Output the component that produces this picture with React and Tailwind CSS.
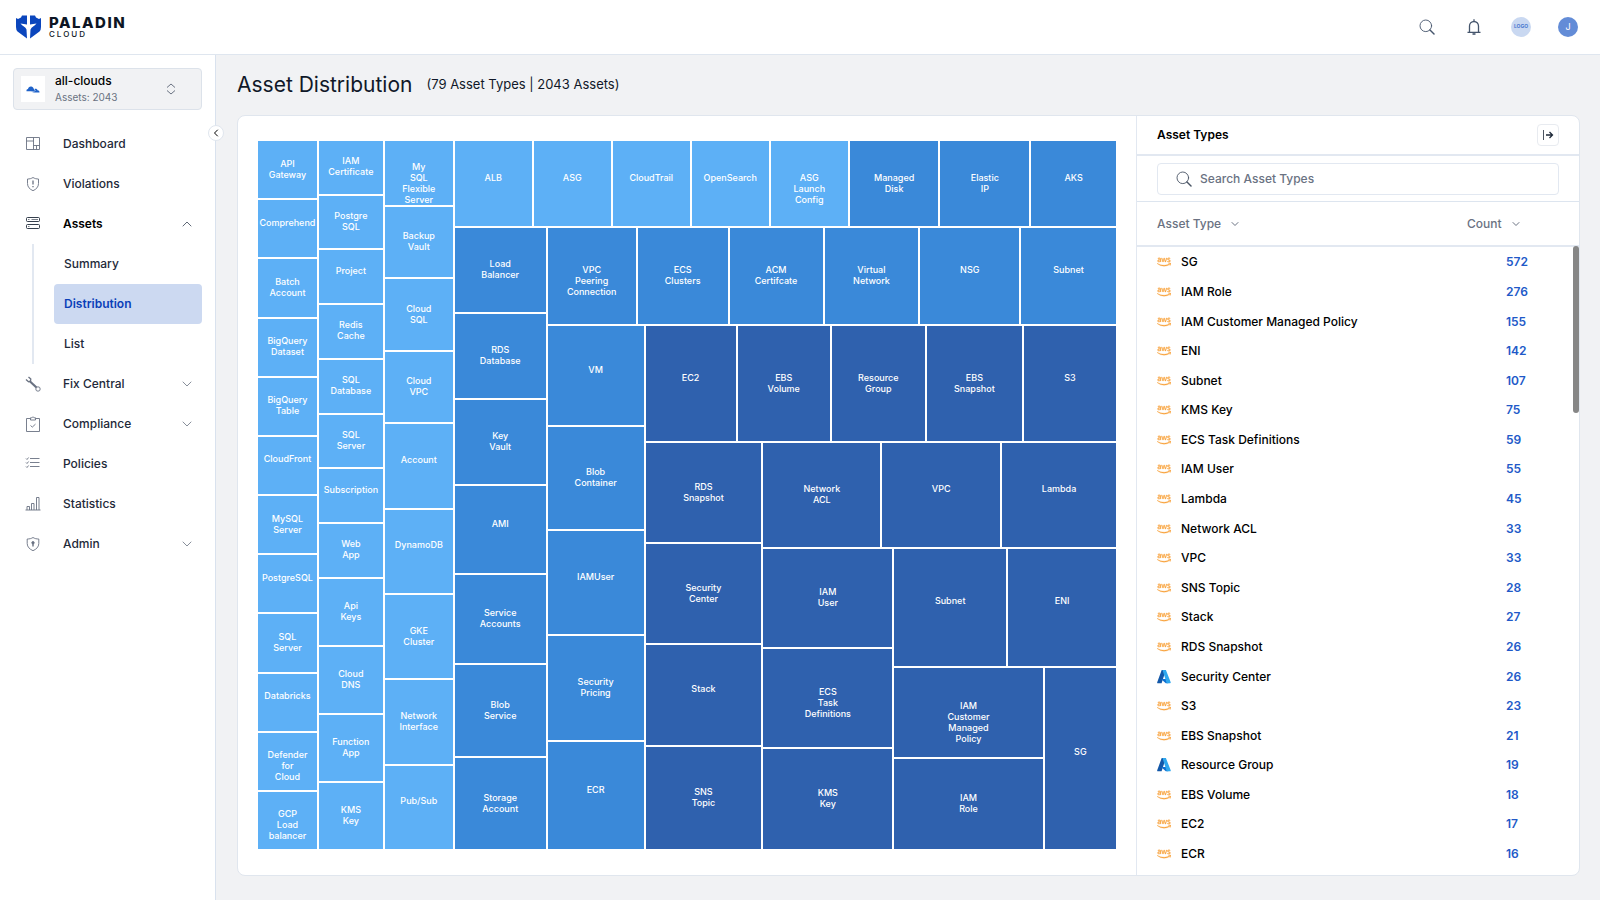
import { ChevronDown, ChevronLeft, ChevronUp } from 'lucide-react';
import { FaAws } from 'react-icons/fa';

const LIGHT = 'bg-[#5db0f6]';
const MID = 'bg-[#3a89d9]';
const DARK = 'bg-[#2f61ae]';

const tile = (size, color, label) => ({ size, color, label });
const row = (size, ...items) => ({ size, dir: 'row', items });
const col = (size, ...items) => ({ size, dir: 'col', items });

const assetMap = row(
  1,
  col(
    61,
    ...[
      'API Gateway', 'Comprehend', 'Batch Account', 'BigQuery Dataset', 'BigQuery Table', 'CloudFront',
      'MySQL Server', 'PostgreSQL', 'SQL Server', 'Databricks', 'Defender for Cloud', 'GCP Load balancer',
    ].map((name) => tile(59, LIGHT, name))
  ),
  col(
    66,
    ...['IAM Certificate', 'Postgre SQL', 'Project', 'Redis Cache', 'SQL Database', 'SQL Server', 'Subscription', 'Web App']
      .map((name) => tile(55, LIGHT, name)),
    ...['Api Keys', 'Cloud DNS', 'Function App', 'KMS Key'].map((name) => tile(69, LIGHT, name))
  ),
  col(
    70,
    tile(65, LIGHT, 'My SQL Flexible Server'),
    ...['Backup Vault', 'Cloud SQL', 'Cloud VPC'].map((name) => tile(72, LIGHT, name)),
    ...['Account', 'DynamoDB', 'GKE Cluster', 'Network Interface', 'Pub/Sub'].map((name) => tile(85, LIGHT, name))
  ),
  col(
    664,
    row(
      87,
      ...['ALB', 'ASG', 'CloudTrail', 'OpenSearch', 'ASG Launch Config'].map((name) => tile(79, LIGHT, name)),
      tile(91, MID, 'Managed Disk'),
      tile(91, MID, 'Elastic IP'),
      tile(87, MID, 'AKS')
    ),
    row(
      623,
      col(
        93,
        tile(86, MID, 'Load Balancer'),
        tile(86, MID, 'RDS Database'),
        tile(86, MID, 'Key Vault'),
        tile(89, MID, 'AMI'),
        tile(90, MID, 'Service Accounts'),
        tile(93, MID, 'Blob Service'),
        tile(93, MID, 'Storage Account')
      ),
      col(
        571,
        row(
          98,
          tile(90, MID, 'VPC Peering Connection'),
          tile(92, MID, 'ECS Clusters'),
          tile(95, MID, 'ACM Certifcate'),
          tile(96, MID, 'Virtual Network'),
          tile(101, MID, 'NSG'),
          tile(97, MID, 'Subnet')
        ),
        row(
          525,
          col(
            98,
            tile(101, MID, 'VM'),
            tile(104, MID, 'Blob Container'),
            tile(105, MID, 'IAMUser'),
            tile(106, MID, 'Security Pricing'),
            tile(109, MID, 'ECR')
          ),
          col(
            473,
            row(
              117,
              tile(92, DARK, 'EC2'),
              tile(94, DARK, 'EBS Volume'),
              tile(95, DARK, 'Resource Group'),
              tile(97, DARK, 'EBS Snapshot'),
              tile(94, DARK, 'S3')
            ),
            row(
              408,
              col(
                118,
                tile(101, DARK, 'RDS Snapshot'),
                tile(101, DARK, 'Security Center'),
                tile(102, DARK, 'Stack'),
                tile(104, DARK, 'SNS Topic')
              ),
              col(
                355,
                row(106, tile(119, DARK, 'Network ACL'), tile(120, DARK, 'VPC'), tile(116, DARK, 'Lambda')),
                row(
                  302,
                  col(131, tile(100, DARK, 'IAM User'), tile(101, DARK, 'ECS Task Definitions'), tile(102, DARK, 'KMS Key')),
                  col(
                    224,
                    row(119, tile(114, DARK, 'Subnet'), tile(110, DARK, 'ENI')),
                    row(
                      184,
                      col(152, tile(91, DARK, 'IAM Customer Managed Policy'), tile(92, DARK, 'IAM Role')),
                      tile(72, DARK, 'SG')
                    )
                  )
                )
              )
            )
          )
        )
      )
    )
  )
);

const assetTypes = [
  ['SG', 572], ['IAM Role', 276], ['IAM Customer Managed Policy', 155], ['ENI', 142], ['Subnet', 107],
  ['KMS Key', 75], ['ECS Task Definitions', 59], ['IAM User', 55], ['Lambda', 45], ['Network ACL', 33],
  ['VPC', 33], ['SNS Topic', 28], ['Stack', 27], ['RDS Snapshot', 26], ['Security Center', 26, 'azure'],
  ['S3', 23], ['EBS Snapshot', 21], ['Resource Group', 19, 'azure'], ['EBS Volume', 18], ['EC2', 17], ['ECR', 16],
];

const NavSvg = ({ children }) => (
  <svg className="w-4 h-4 text-gray-500" viewBox="0 0 16 16" fill="none" stroke="currentColor" strokeWidth="0.9">
    {children}
  </svg>
);

const icons = {
  dashboard: <NavSvg><path d="M1.500 1.500h13v12h-13zM8.500 1.500v12M1.500 5h7M8.500 9.500h6M11.500 9.500v4" /></NavSvg>,
  violations: (
    <NavSvg>
      <path d="M8 1.500c1.700 1.100 3.500 1.500 5.500 1.500v4.500c0 3.500-2.200 5.700-5.500 7.200-3.300-1.500-5.500-3.700-5.500-7.200V3c2 0 3.800-.4 5.500-1.500z" />
      <path d="M8 4.500v4M8 10v1.300" strokeWidth="1.300" />
    </NavSvg>
  ),
  assets: (
    <svg className="w-4 h-4 text-gray-800" viewBox="0 0 16 16" fill="none" stroke="currentColor" strokeWidth="0.9">
      <rect x="1.500" y="1.500" width="13" height="4" rx="1" />
      <rect x="1.500" y="8.500" width="13" height="4" rx="1" />
      <path d="M3 3.500h1.500M3 10.500h1.500M6.500 3.500h6.500" strokeWidth="0.600" />
    </svg>
  ),
  fix: (
    <NavSvg>
      <path d="M4.500 5l7 6.500" strokeWidth="2.200" />
      <path d="M1 3.500l2.500 2.300 2-.8.300-2L3.500 1" strokeWidth="1.300" />
      <circle cx="13" cy="13" r="2.200" />
    </NavSvg>
  ),
  compliance: (
    <NavSvg>
      <path d="M5 2.500H1.500v13h13v-13H11" />
      <path d="M5.500 4V1.800h1.300a1.300 1.300 0 0 1 2.400 0h1.300V4zM5.500 9.500l1.800 1.600 3.200-3" />
    </NavSvg>
  ),
  policies: <NavSvg><path d="M5 2.500h9.500M5 6.500h9.500M5 10.500h9.500M1 2.500l1 1 1.600-2M1 6.500l1 1 1.600-2M1 10.500l1 1 1.600-2" /></NavSvg>,
  statistics: <NavSvg><path d="M.5 14h15M2 14v-3.500h2.500V14M6.500 14V7.500H9V14M11.500 14V1.500H14V14" /></NavSvg>,
  admin: (
    <NavSvg>
      <path d="M8 1.500c1.700 1.100 3.500 1.500 5.800 1.500v4.500c0 3.500-2.500 5.700-5.800 7.200-3.300-1.500-5.800-3.700-5.800-7.200V3c2.300 0 4.100-.4 5.800-1.500z" />
      <circle cx="8" cy="6.800" r="1.200" fill="currentColor" />
      <path d="M8 7.500v3" strokeWidth="1.400" />
    </NavSvg>
  ),
};

const navItems = [
  { icon: 'dashboard', label: 'Dashboard' },
  { icon: 'violations', label: 'Violations' },
  { icon: 'assets', label: 'Assets', open: true, children: ['Summary', 'Distribution', 'List'] },
  { icon: 'fix', label: 'Fix Central', expandable: true },
  { icon: 'compliance', label: 'Compliance', expandable: true },
  { icon: 'policies', label: 'Policies' },
  { icon: 'statistics', label: 'Statistics' },
  { icon: 'admin', label: 'Admin', expandable: true },
];

const SearchIcon = () => (
  <svg className="w-4 h-4" viewBox="0 0 16 16" fill="none" stroke="currentColor" strokeLinecap="round">
    <circle cx="6.800" cy="6.800" r="5.800" strokeWidth="0.900" />
    <path d="M11 11l4 4" strokeWidth="1.500" />
  </svg>
);

const BellIcon = () => (
  <svg className="w-4 h-4" viewBox="0 0 16 16" fill="none" stroke="currentColor" strokeWidth="1.300">
    <path d="M3.500 13V7a4.500 4.500 0 0 1 9 0v6M1.500 13.300h13M8 .3v2" />
    <path d="M6.500 15h3" strokeWidth="1.600" />
  </svg>
);

const AzureIcon = () => (
  <svg className="w-3.5 h-3.5" viewBox="0 0 14 14">
    <path d="M4.700 0h4.200L4.600 13.300H1a.8.800 0 0 1-.8-1z" fill="#1257a8" />
    <path d="M4 9h6.500l.8 4.300H8.800z" fill="#0f6fd0" />
    <path d="M5.500 0h3.400l4.800 12.300a.8.800 0 0 1-.8 1H9.700z" fill="#2fa8ee" />
  </svg>
);

// Each node takes a share of its parent equal to its size
function MapNode({ node }) {
  if (node.items) {
    return (
      <div
        className={`flex basis-0 min-w-0 min-h-0 ${node.dir === 'row' ? 'flex-row' : 'flex-col'}`}
        style={{ flexGrow: node.size }}
      >
        {node.items.map((item, i) => (
          <MapNode key={i} node={item} />
        ))}
      </div>
    );
  }
  return (
    <div
      className={`grid grid-rows-2 basis-0 min-w-0 min-h-0 border border-white text-center text-[9px] leading-[11px] font-medium text-white ${node.color}`}
      style={{ flexGrow: node.size }}
    >
      <div className="row-start-2 -mt-3">
        {node.label.split(' ').map((word, i) => (
          <div key={i}>{word}</div>
        ))}
      </div>
    </div>
  );
}

function Header() {
  return (
    <header className="flex h-[55px] shrink-0 items-center justify-between border-b border-[#dfe6ef] bg-white pl-4 pr-[22px]">
      <a href="#" className="flex items-center gap-2">
        <svg className="w-[25px] h-6" viewBox="0 0 25 24" fill="#0b46bd">
          <path d="M11 .5v9L4.500 8.500C6.500 11 9.500 12 10.500 14.500L11 23.500 1.500 16.500Q0 15 0 12V3l2 1L5 2.500 6 .5z" />
          <path d="M14 .5v9l6.500-1C18.500 11 15.500 12 14.500 14.500L14 23.500l9.500-7Q25 15 25 12V3l-2 1-3-1.500L19 .5z" />
        </svg>
        <div className="text-[#0d1524]">
          <div className="text-[15px] leading-[14px] font-extrabold tracking-widest">PALADIN</div>
          <div className="text-[8px] leading-[8px] font-medium tracking-[2px]">CLOUD</div>
        </div>
      </a>
      <div className="flex items-center gap-[27px] text-slate-600">
        <button className="flex w-5 justify-center" aria-label="Search">
          <SearchIcon />
        </button>
        <button className="flex w-5 justify-center" aria-label="Notifications">
          <BellIcon />
        </button>
        <button className="flex w-5 h-5 items-center justify-center rounded-full bg-[#c9d8f1] text-[5px] font-bold text-[#4a78cf]">
          LOGO
        </button>
        <button className="flex w-5 h-5 items-center justify-center rounded-full bg-[#638cd7] text-[9px] text-white">
          J
        </button>
      </div>
    </header>
  );
}

function Sidebar() {
  return (
    <aside className="relative w-[216px] shrink-0 border-r border-[#d9e2ee] bg-white px-[13px] pt-[13px]">
      <button className="flex h-[42px] w-full items-center rounded border border-[#dce2ea] bg-[#f1f2f4] pl-[7px] pr-6 text-left">
        <span className="flex h-[26px] w-6 items-center justify-center bg-white">
          <svg className="w-[14px] h-[7px]" viewBox="0 0 14 7" fill="#1f62c9">
            <path d="M.5 5.200C.3 3.800 1 3 2 3 2.300 1.300 3.600.3 5.200.5 6.600.6 7.200 1.500 7.600 2.600L9 4.800 8 5.200z" />
            <path d="M8.500 3c1.500-.6 2.700 0 3 1.200 1.300 0 2 .8 2 2.300H8L5 5.800c2 0 3.500-.3 4.600-1z" />
          </svg>
        </span>
        <span className="ml-2.5 flex-1">
          <span className="block text-[12px] leading-4 font-medium text-black">all-clouds</span>
          <span className="block text-[10px] leading-4 text-gray-500">Assets: 2043</span>
        </span>
        <svg className="w-3 h-3 text-gray-500" viewBox="0 0 12 12" fill="none" stroke="currentColor" strokeWidth="1">
          <path d="M2 4.500L6 1l4 3.500M2 7.500L6 11l4-3.500" />
        </svg>
      </button>

      <nav className="mt-3.5 text-[12px] text-gray-800">
        {navItems.map((item) => (
          <div key={item.label}>
            <button className={`flex h-10 w-full items-center pl-3 pr-[7px] ${item.open ? 'font-semibold text-black' : 'font-medium'}`}>
              {icons[item.icon]}
              <span className="ml-[22px] flex-1 text-left">{item.label}</span>
              {item.expandable && <ChevronDown className="w-4 h-4 text-gray-500" strokeWidth={1.2} />}
              {item.open && <ChevronUp className="w-4 h-4 text-gray-700" strokeWidth={1.2} />}
            </button>
            {item.children && (
              <div className="ml-[19px] border-l-2 border-[#e2e8f1] pl-5">
                {item.children.map((child) => (
                  <a
                    key={child}
                    href="#"
                    className={`flex h-10 items-center rounded-sm pl-2.5 ${child === 'Distribution' ? 'bg-[#ccd9f1] font-semibold text-[#0a3fb8]' : 'font-medium'}`}
                  >
                    {child}
                  </a>
                ))}
              </div>
            )}
          </div>
        ))}
      </nav>

      <button
        className="absolute top-[70px] -right-[9px] flex w-4 h-4 items-center justify-center rounded-full border border-[#e0e6ee] bg-white"
        aria-label="Collapse menu"
      >
        <ChevronLeft className="w-3 h-3" />
      </button>
    </aside>
  );
}

function AssetTypesPanel() {
  return (
    <section className="flex w-[443px] shrink-0 flex-col border-l border-[#e2e8f1] text-[12px]">
      <div className="flex h-10 shrink-0 items-center justify-between border-b-2 border-[#e2e8f1] px-5">
        <h2 className="font-semibold text-black">Asset Types</h2>
        <button className="flex w-[22px] h-[22px] items-center justify-center rounded border border-[#e8ebf0]" aria-label="Hide panel">
          <svg className="w-3 h-3 text-gray-800" viewBox="0 0 12 12" fill="none" stroke="currentColor">
            <path d="M1.500 1v10" strokeWidth="0.800" />
            <path d="M4 6h6.500M7.500 3l3 3-3 3" strokeWidth="1.300" />
          </svg>
        </button>
      </div>

      <div className="flex h-[46px] shrink-0 items-center border-b border-[#dde5ef] px-5">
        <label className="flex h-8 flex-1 items-center gap-2 rounded border border-[#e2e8f1] pl-[18px] text-gray-600">
          <SearchIcon />
          <input
            type="text"
            aria-label="Search Asset Types"
            placeholder="Search Asset Types"
            className="flex-1 font-medium outline-none placeholder:text-gray-500"
          />
        </label>
      </div>

      <div className="relative min-h-0 flex-1 pb-1.5">
        <table className="h-full w-full text-left">
          <thead className="text-gray-500">
            <tr className="h-11 border-b-2 border-[#e2e8f1]">
              <th className="p-0 pl-5 font-medium">
                <button className="flex items-center gap-2">
                  Asset Type <ChevronDown className="w-3 h-3" />
                </button>
              </th>
              <th className="w-28 p-0 font-medium">
                <button className="flex items-center gap-2">
                  Count <ChevronDown className="w-3 h-3" />
                </button>
              </th>
            </tr>
          </thead>
          <tbody>
            {assetTypes.map(([name, count, cloud]) => (
              <tr key={name}>
                <td className="p-0 pl-5 font-medium text-black">
                  <div className="flex items-center gap-2.5">
                    {cloud === 'azure' ? (
                      <AzureIcon />
                    ) : (
                      <FaAws className="w-3.5 h-3.5 text-[#f9a13a]" stroke="currentColor" strokeWidth="12" />
                    )}
                    {name}
                  </div>
                </td>
                <td className="p-0 pl-[39px] font-semibold text-[#2159c8]">{count}</td>
              </tr>
            ))}
          </tbody>
        </table>
        <div className="absolute right-0 top-11 h-[167px] w-1.5 rounded-sm bg-[#868686]" />
      </div>
    </section>
  );
}

export default function App() {
  return (
    <div className="flex h-screen flex-col font-['Inter',sans-serif]">
      <Header />
      <div className="flex min-h-0 flex-1">
        <Sidebar />
        <main className="flex min-w-0 flex-1 flex-col bg-[#f1f2f4] pb-6 pl-[21px] pr-5">
          <div className="flex h-[60px] shrink-0 items-center gap-3.5">
            <h1 className="text-[21px] text-gray-900">Asset Distribution</h1>
            <p className="text-[13px] text-gray-900">(79 Asset Types | 2043 Assets)</p>
          </div>
          <div className="flex min-h-0 flex-1 rounded-lg border border-[#e0e6ee] bg-white">
            <div className="flex min-w-0 flex-1 pt-6 pb-[25px] pl-[19px] pr-[19px]">
              <MapNode node={assetMap} />
            </div>
            <AssetTypesPanel />
          </div>
        </main>
      </div>
    </div>
  );
}
